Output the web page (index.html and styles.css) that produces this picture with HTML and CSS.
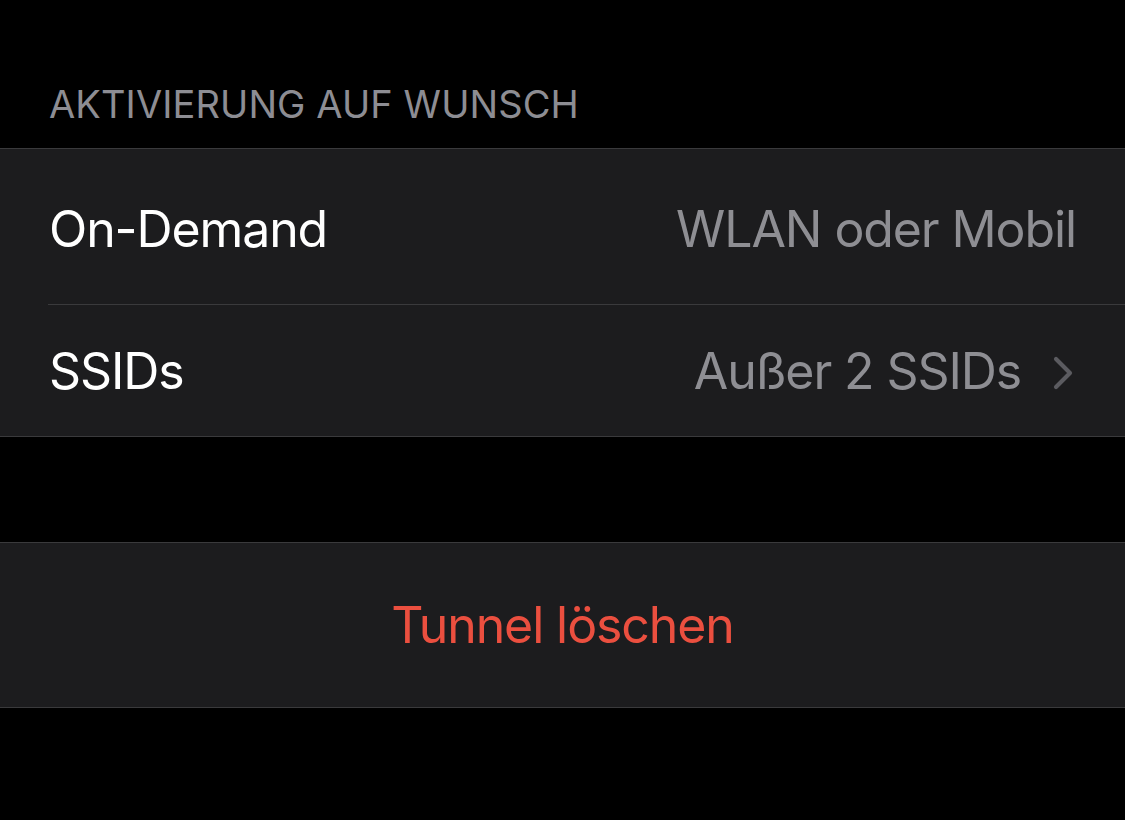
FILE: index.html
```html
<!DOCTYPE html>
<html lang="de">
<head>
    <meta charset="UTF-8">
    <meta name="viewport" content="width=device-width, initial-scale=1.0">
    <title>Tunnel</title>
    <link rel="stylesheet" href="styles.css">
</head>
<body>
    <div class="section-header">AKTIVIERUNG AUF WUNSCH</div>

    <!-- On-Demand settings -->
    <div class="group">
        <div class="row row-tall">
            <span class="label">On-Demand</span>
            <span class="value">WLAN oder Mobil</span>
        </div>
        <div class="row">
            <span class="label">SSIDs</span>
            <span class="value">Außer 2 SSIDs</span>
            <svg class="chevron" width="22" height="34" viewBox="0 0 22 34">
                <path d="M4 3 L18 17 L4 31" fill="none" stroke="#5b5b60" stroke-width="4.2" stroke-linecap="round" stroke-linejoin="round"/>
            </svg>
        </div>
    </div>

    <!-- Delete -->
    <div class="group group-delete">
        <div class="delete">Tunnel löschen</div>
    </div>
</body>
</html>
```

FILE: styles.css
```css
/* General Styles */
body {
    margin: 0;
    background-color: #000;
    font-family: 'Inter', 'Roboto', sans-serif;
    width: 1125px;
    height: 820px;
    overflow: hidden;
}

.section-header {
    color: #8d8d93;
    font-size: 38px;
    letter-spacing: 0.1px;
    padding: 81px 0 0 49px;
    height: 148px;
    box-sizing: border-box;
    line-height: 46px;
}

.group {
    background-color: #1c1c1e;
    border-top: 1px solid #3a3a3c;
    border-bottom: 1px solid #3a3a3c;
}

.row {
    display: flex;
    align-items: center;
    height: 131px;
    margin-left: 48px;
    padding-right: 49px;
    font-size: 50px;
    letter-spacing: -1.1px;
}

.row-tall {
    height: 155px;
    border-bottom: 1px solid #3a3a3c;
}

.row-tall .label,
.row-tall .value {
    position: relative;
    top: 2px;
}

.label {
    color: #fff;
    flex: 1;
    padding-left: 1px;
}

.value {
    color: #8e8e93;
}

.row .chevron {
    margin-left: 31px;
    margin-right: 2px;
    position: relative;
    top: 2px;
}

.group-delete {
    margin-top: 105px;
}

.delete {
    height: 164px;
    display: flex;
    align-items: center;
    justify-content: center;
    color: #eb4f3f;
    font-size: 50px;
    letter-spacing: -1.1px;
}
```
